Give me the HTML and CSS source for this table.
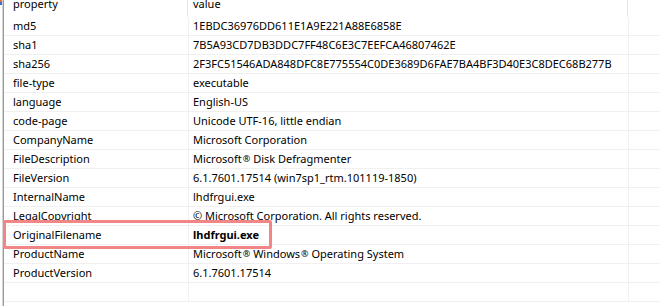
FILE: index.html
```html
<!DOCTYPE html>
<html>
<head>
<meta charset="utf-8">
<link rel="stylesheet" href="styles.css">
</head>
<body>
<div class="frame">
  <div class="edge-mark"></div>
  <div class="list">
    <div class="head">
      <div class="h1">property</div>
      <div class="h2">value</div>
      <div class="h3"></div>
    </div>
    <div class="row"><div class="c1">md5</div><div class="c2">1EBDC36976DD611E1A9E221A88E6858E</div><div class="c3"></div></div>
    <div class="row"><div class="c1">sha1</div><div class="c2">7B5A93CD7DB3DDC7FF48C6E3C7EEFCA46807462E</div><div class="c3"></div></div>
    <div class="row"><div class="c1">sha256</div><div class="c2">2F3FC51546ADA848DFC8E775554C0DE3689D6FAE7BA4BF3D40E3C8DEC68B277B</div><div class="c3"></div></div>
    <div class="row"><div class="c1">file-type</div><div class="c2">executable</div><div class="c3"></div></div>
    <div class="row"><div class="c1">language</div><div class="c2">English-US</div><div class="c3"></div></div>
    <div class="row"><div class="c1">code-page</div><div class="c2">Unicode UTF-16, little endian</div><div class="c3"></div></div>
    <div class="row"><div class="c1">CompanyName</div><div class="c2">Microsoft Corporation</div><div class="c3"></div></div>
    <div class="row"><div class="c1">FileDescription</div><div class="c2">Microsoft<span class="reg">®</span> Disk Defragmenter</div><div class="c3"></div></div>
    <div class="row"><div class="c1">FileVersion</div><div class="c2">6.1.7601.17514 (win7sp1_rtm.101119-1850)</div><div class="c3"></div></div>
    <div class="row"><div class="c1">InternalName</div><div class="c2">lhdfrgui.exe</div><div class="c3"></div></div>
    <div class="row"><div class="c1">LegalCopyright</div><div class="c2">© Microsoft Corporation. All rights reserved.</div><div class="c3"></div></div>
    <div class="row"><div class="c1">OriginalFilename</div><div class="c2 bold">lhdfrgui.exe</div><div class="c3"></div></div>
    <div class="row"><div class="c1">ProductName</div><div class="c2">Microsoft<span class="reg">®</span> Windows<span class="reg">®</span> Operating System</div><div class="c3"></div></div>
    <div class="row"><div class="c1">ProductVersion</div><div class="c2">6.1.7601.17514</div><div class="c3"></div></div>
    <div class="row"><div class="c1"></div><div class="c2"></div><div class="c3"></div></div>
  </div>
  <div class="highlight"></div>
</div>
</body>
</html>
```

FILE: styles.css
```css
html, body {
  margin: 0;
  padding: 0;
  background: #ffffff;
}

body {
  width: 660px;
  height: 306px;
  overflow: hidden;
  font-family: "Noto Sans", "Open Sans", sans-serif;
  font-size: 11px;
  color: #000000;
}

.frame {
  position: relative;
  height: 306px;
  padding-left: 2px;
}

.edge-mark {
  position: absolute;
  left: 0;
  top: 0;
  width: 2px;
  height: 5px;
  background: linear-gradient(#e0703a 0 2px, #3a6fd8 2px 5px);
}

.list {
  height: 306px;
  border-left: 1px solid #d4d4d4;
  box-shadow: inset 1px 0 0 #9a9a9a;
  padding-left: 1px;
}

.head {
  display: grid;
  grid-template-columns: 184px 440px 1fr;
  height: 17px;
}

.head > div {
  line-height: 7px;
  white-space: nowrap;
}

.h1 {
  padding-left: 9px;
  border-right: 1px solid #e5e5e5;
}

.h2 {
  padding-left: 5px;
  border-right: 1px solid #e5e5e5;
}

.row {
  display: grid;
  grid-template-columns: 185px 440px 1fr;
  height: 18px;
  border-bottom: 1px solid #f0f0f0;
}

.row > div {
  line-height: 18px;
  white-space: nowrap;
  overflow: hidden;
}

.c1 {
  padding-left: 9px;
  border-right: 1px solid #f0f0f0;
}

.c2 {
  padding-left: 4px;
  border-right: 1px solid #f0f0f0;
}

.bold {
  font-weight: 700;
}

.reg {
  font-size: 9px;
  margin-left: 1px;
  vertical-align: 1px;
}

.highlight {
  position: absolute;
  left: 3px;
  top: 220px;
  width: 263px;
  height: 23px;
  border: 3px solid #f28686;
  border-radius: 2px;
  pointer-events: none;
}
```
